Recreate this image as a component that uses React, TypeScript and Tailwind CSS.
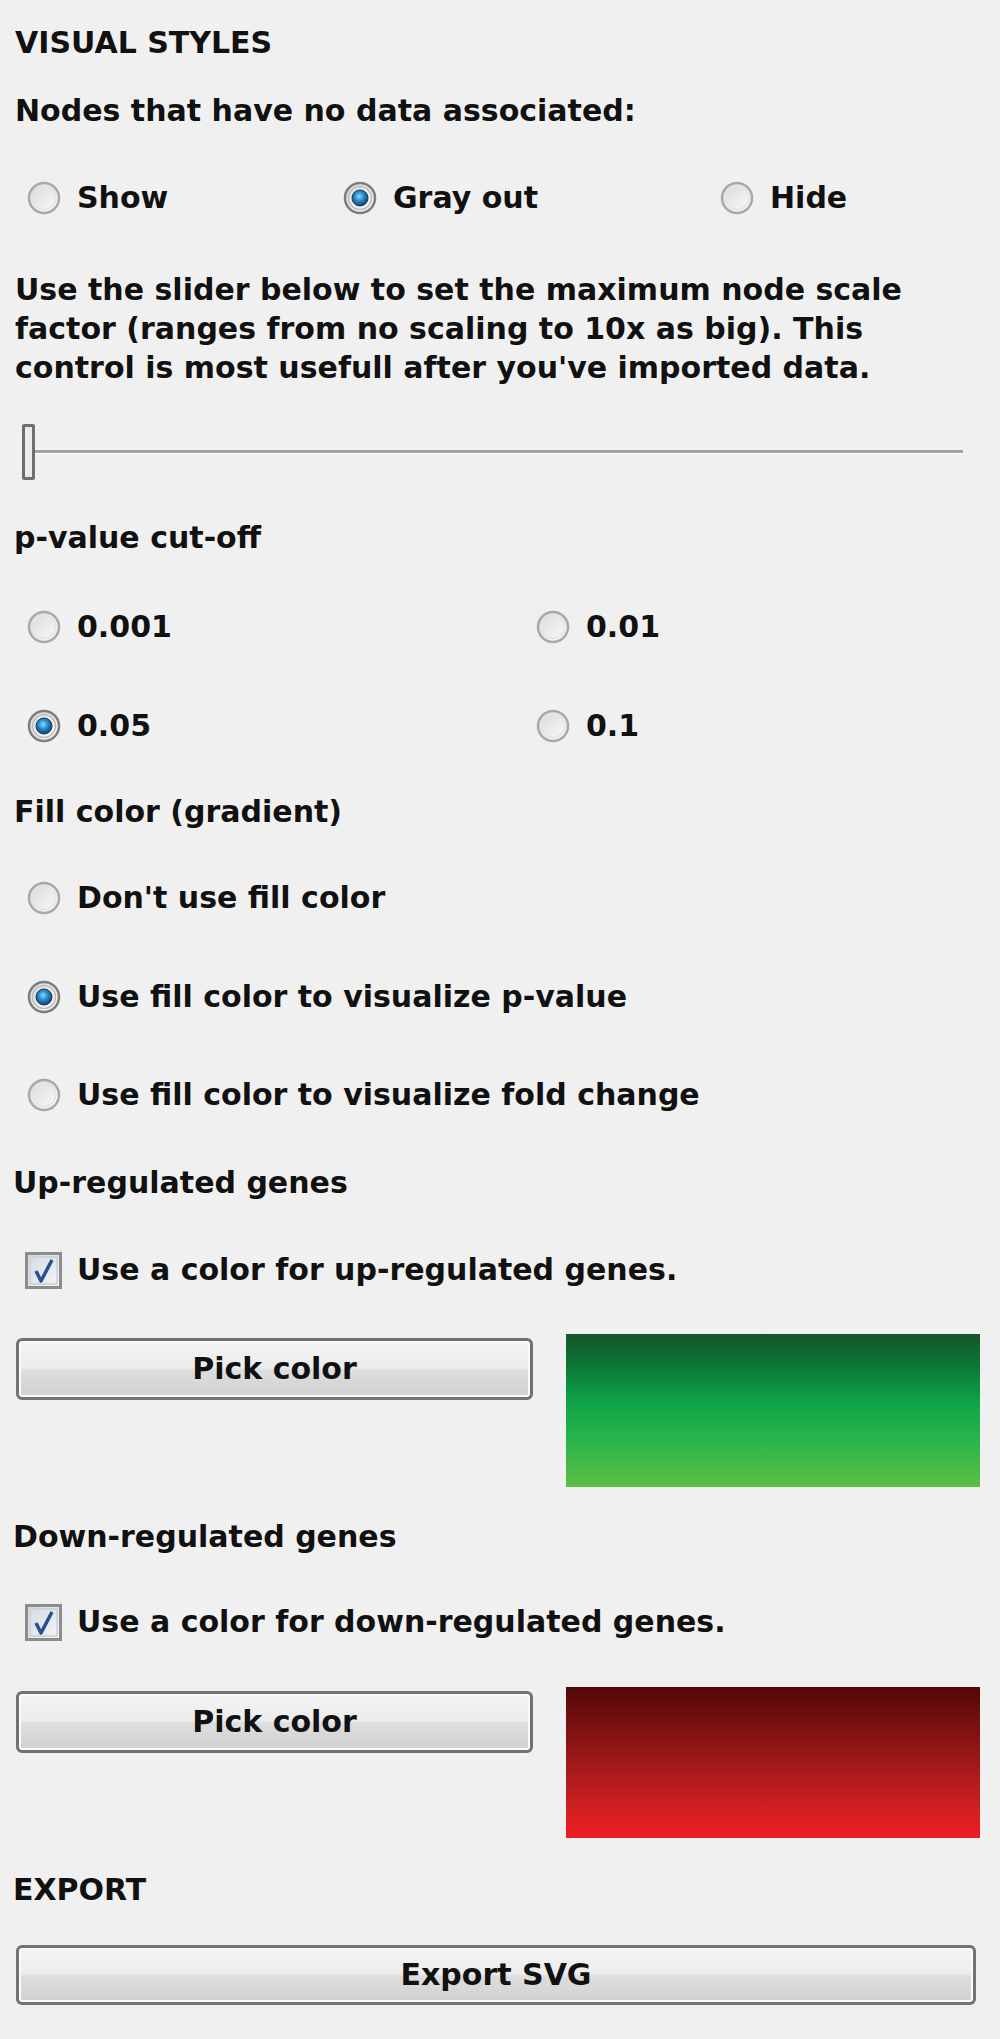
import React from "react";

const Radio = ({ checked }: { checked?: boolean }) => (
  <svg width="34" height="34" viewBox="0 0 34 34" className="shrink-0">
    <defs>
      <linearGradient id="radioBg" x1="0" y1="0" x2="1" y2="1">
        <stop offset="0" stopColor="#d9d9d9" />
        <stop offset="1" stopColor="#fbfbfb" />
      </linearGradient>
      <radialGradient id="radioDot" cx="0.45" cy="0.4" r="0.6">
        <stop offset="0" stopColor="#8fdcff" />
        <stop offset="0.45" stopColor="#2c8fd0" />
        <stop offset="1" stopColor="#0f3f6e" />
      </radialGradient>
    </defs>
    <circle cx="17" cy="17" r="15" fill="url(#radioBg)" stroke={checked ? "#7d7d7d" : "#a9a9a9"} strokeWidth="2.5" />
    <circle cx="17" cy="17" r="11.5" fill="none" stroke={checked ? "#bdbdbd" : "#e4e4e4"} strokeWidth="1.5" />
    {checked && <circle cx="17" cy="17" r="8" fill="url(#radioDot)" stroke="#173c5e" strokeWidth="1" />}
  </svg>
);

const Checkbox = () => (
  <svg width="37" height="37" viewBox="0 0 37 37" className="shrink-0">
    <defs>
      <linearGradient id="checkBg" x1="0" y1="0" x2="1" y2="1">
        <stop offset="0" stopColor="#d4d9e3" />
        <stop offset="1" stopColor="#f4f5f8" />
      </linearGradient>
    </defs>
    <rect x="1.5" y="1.5" width="34" height="34" fill="url(#checkBg)" stroke="#8c8c8c" strokeWidth="3" />
    <rect x="5" y="5" width="27" height="27" fill="none" stroke="#c9ced8" strokeWidth="1.5" />
    <path d="M11 19 L16 29 L27 8" fill="none" stroke="#2a4f8f" strokeWidth="3.5" strokeLinejoin="round" />
  </svg>
);

const Option = ({ label, checked }: { label: string; checked?: boolean }) => (
  <div className="flex items-center gap-[16px]">
    <Radio checked={checked} />
    <span className="whitespace-nowrap">{label}</span>
  </div>
);

const QtButton = ({ label, className }: { label: string; className?: string }) => (
  <div
    className={`flex items-center justify-center rounded-[6px] border-[3px] border-[#727272] bg-[linear-gradient(#f3f3f3_0%,#ececec_48%,#dedede_52%,#d0d0d0_100%)] shadow-[inset_0_0_0_2px_#fafafa] ${className ?? ""}`}
  >
    {label}
  </div>
);

const App = () => {
  return (
    <div className="w-[1000px] h-[2039px] bg-[#f0f0f0] font-['DejaVu_Sans',sans-serif] font-bold text-[30px] text-[#111111] leading-none overflow-hidden">
      <div className="h-[86px] flex items-center pl-[15px]">VISUAL STYLES</div>
      <div className="h-[50px] flex items-center pl-[15px]">Nodes that have no data associated:</div>
      <div className="h-[124px] flex items-center pl-[27px]">
        <div className="w-[316px]">
          <Option label="Show" />
        </div>
        <div className="w-[377px]">
          <Option label="Gray out" checked />
        </div>
        <Option label="Hide" />
      </div>

      <div className="h-[130px] pt-[10px] pl-[15px] leading-[39px] whitespace-nowrap">
        Use the slider below to set the maximum node scale
        <br />
        factor (ranges from no scaling to 10x as big). This
        <br />
        control is most usefull after you've imported data.
      </div>

      {/* node scale slider */}
      <div className="h-[124px] flex items-center pl-[22px] pr-[37px]">
        <div className="w-[13px] h-[56px] rounded-[2px] border-[3px] border-[#6e6e6e] bg-[#ececec] shrink-0" />
        <div className="flex-1 h-[4px] bg-[#a3a3a3] border-b border-[#ffffff]" />
      </div>

      <div className="h-[48px] flex items-center pl-[14px]">p-value cut-off</div>
      <div className="h-[130px] flex items-center pl-[27px]">
        <div className="w-[509px]">
          <Option label="0.001" />
        </div>
        <Option label="0.01" />
      </div>
      <div className="h-[68px] flex items-center pl-[27px]">
        <div className="w-[509px]">
          <Option label="0.05" checked />
        </div>
        <Option label="0.1" />
      </div>

      <div className="h-[104px] flex items-center pl-[14px]">Fill color (gradient)</div>
      <div className="h-[68px] flex items-center pl-[27px]">
        <Option label="Don't use fill color" />
      </div>
      <div className="h-[130px] flex items-center pl-[27px]">
        <Option label="Use fill color to visualize p-value" checked />
      </div>
      <div className="h-[66px] flex items-center pl-[27px]">
        <Option label="Use fill color to visualize fold change" />
      </div>

      <div className="h-[110px] flex items-center pl-[13px]">Up-regulated genes</div>
      <div className="h-[64px] flex items-center pl-[25px] gap-[15px]">
        <Checkbox />
        <span>Use a color for up-regulated genes.</span>
      </div>
      <div className="h-[198px] flex items-start pt-[32px] pl-[16px] gap-[33px]">
        <QtButton label="Pick color" className="w-[517px] h-[62px] mt-[4px]" />
        <div className="w-[414px] h-[153px] bg-[linear-gradient(#17552a_0%,#0b7a37_22%,#0ea447_45%,#23b24b_65%,#5dbe45_100%)]" />
      </div>

      <div className="h-[74px] flex items-center pl-[13px]">Down-regulated genes</div>
      <div className="h-[96px] flex items-center pl-[25px] gap-[15px]">
        <Checkbox />
        <span>Use a color for down-regulated genes.</span>
      </div>
      <div className="h-[190px] flex items-start pt-[17px] pl-[16px] gap-[33px]">
        <QtButton label="Pick color" className="w-[517px] h-[62px] mt-[4px]" />
        <div className="w-[414px] h-[151px] bg-[linear-gradient(#520808_0%,#7a1010_25%,#a81a1a_55%,#cf2020_80%,#ee1c24_100%)]" />
      </div>

      <div className="h-[60px] flex items-center pl-[13px]">EXPORT</div>
      <div className="pt-[25px] pl-[16px]">
        <QtButton label="Export SVG" className="w-[960px] h-[60px]" />
      </div>
    </div>
  );
};

export default App;
